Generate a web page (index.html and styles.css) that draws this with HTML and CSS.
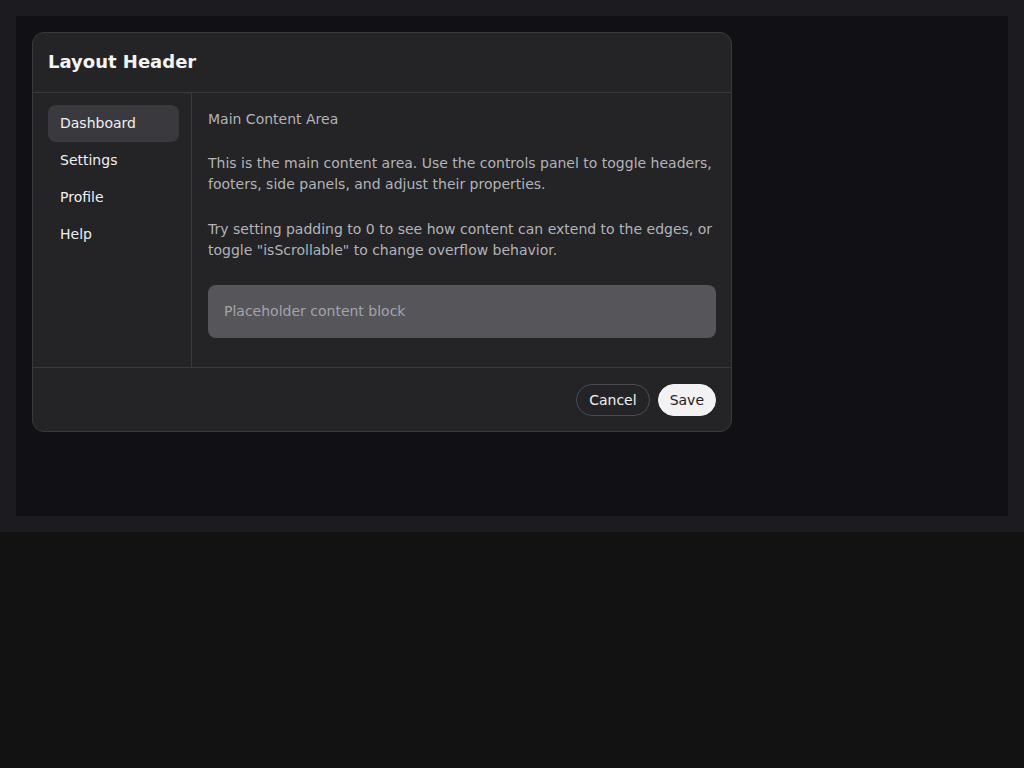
FILE: index.html
```html
<!DOCTYPE html>
<html lang="en">
<head>
    <meta charset="UTF-8">
    <title>Layout Header</title>
    <link rel="stylesheet" href="styles.css">
</head>
<body>
    <div class="stage">
        <div class="canvas">
            <div class="dialog">
                <div class="dialog-header">
                    <h2>Layout Header</h2>
                </div>

                <div class="dialog-body">
                    <nav class="side-panel">
                        <a class="nav-item active">Dashboard</a>
                        <a class="nav-item">Settings</a>
                        <a class="nav-item">Profile</a>
                        <a class="nav-item">Help</a>
                    </nav>

                    <main class="content">
                        <div class="content-title">Main Content Area</div>
                        <p class="para-first">This is the main content area. Use the controls panel to toggle headers, footers, side panels, and adjust their properties.</p>
                        <p class="para-second">Try setting padding to 0 to see how content can extend to the edges, or toggle "isScrollable" to change overflow behavior.</p>
                        <div class="placeholder">Placeholder content block</div>
                    </main>
                </div>

                <div class="dialog-footer">
                    <button class="btn btn-ghost">Cancel</button>
                    <button class="btn btn-primary">Save</button>
                </div>
            </div>
        </div>
    </div>
</body>
</html>
```

FILE: styles.css
```css
body {
    margin: 0;
    background: #121212;
    font-family: 'DejaVu Sans', 'Noto Sans', sans-serif;
    font-size: 14px;
    line-height: 21px;
    color: #f0f0f2;
}

.stage {
    background: #1c1b20;
    padding: 16px;
}

.canvas {
    background: #111015;
    height: 468px;
    padding: 16px;
}

.dialog {
    width: 698px;
    background: #242426;
    border: 1px solid #3a3a3e;
    border-radius: 12px;
}

.dialog-header {
    padding: 15px 15px 17px;
    border-bottom: 1px solid #3a3a3e;
}

.dialog-header h2 {
    margin: 0;
    font-size: 18px;
    line-height: 27px;
    font-weight: bold;
    color: #f4f4f6;
}

.dialog-body {
    display: flex;
}

.side-panel {
    width: 131px;
    padding: 12px 12px 12px 15px;
    border-right: 1px solid #3a3a3e;
    display: flex;
    flex-direction: column;
}

.nav-item {
    padding: 8px 12px;
    border-radius: 8px;
    color: #f0f0f2;
    cursor: pointer;
}

.nav-item.active {
    background: #3a3a3e;
}

.content {
    flex: 1;
    padding: 16px 15px 16px 16px;
    color: #b3b3b8;
}

.content-title {
    margin-bottom: 22.5px;
}

.content p {
    margin: 0;
}

.para-first {
    margin-bottom: 24.5px !important;
}

.para-second {
    margin-bottom: 24px !important;
}

.placeholder {
    background: #56555a;
    border-radius: 8px;
    padding: 16px;
    margin-bottom: 13px;
    color: #a3a3aa;
}

.dialog-footer {
    border-top: 1px solid #3a3a3e;
    padding: 16px 15px 15px;
    display: flex;
    justify-content: flex-end;
    gap: 8px;
}

.btn {
    height: 32px;
    padding: 0 12px;
    border-radius: 16px;
    font-family: inherit;
    font-size: 14px;
    cursor: pointer;
}

.btn-ghost {
    background: none;
    border: 1px solid #4a4a50;
    color: #f0f0f2;
}

.btn-primary {
    padding: 0 11px;
    background: #f2f2f4;
    border: 1px solid #f2f2f4;
    color: #1c1b20;
}
```
